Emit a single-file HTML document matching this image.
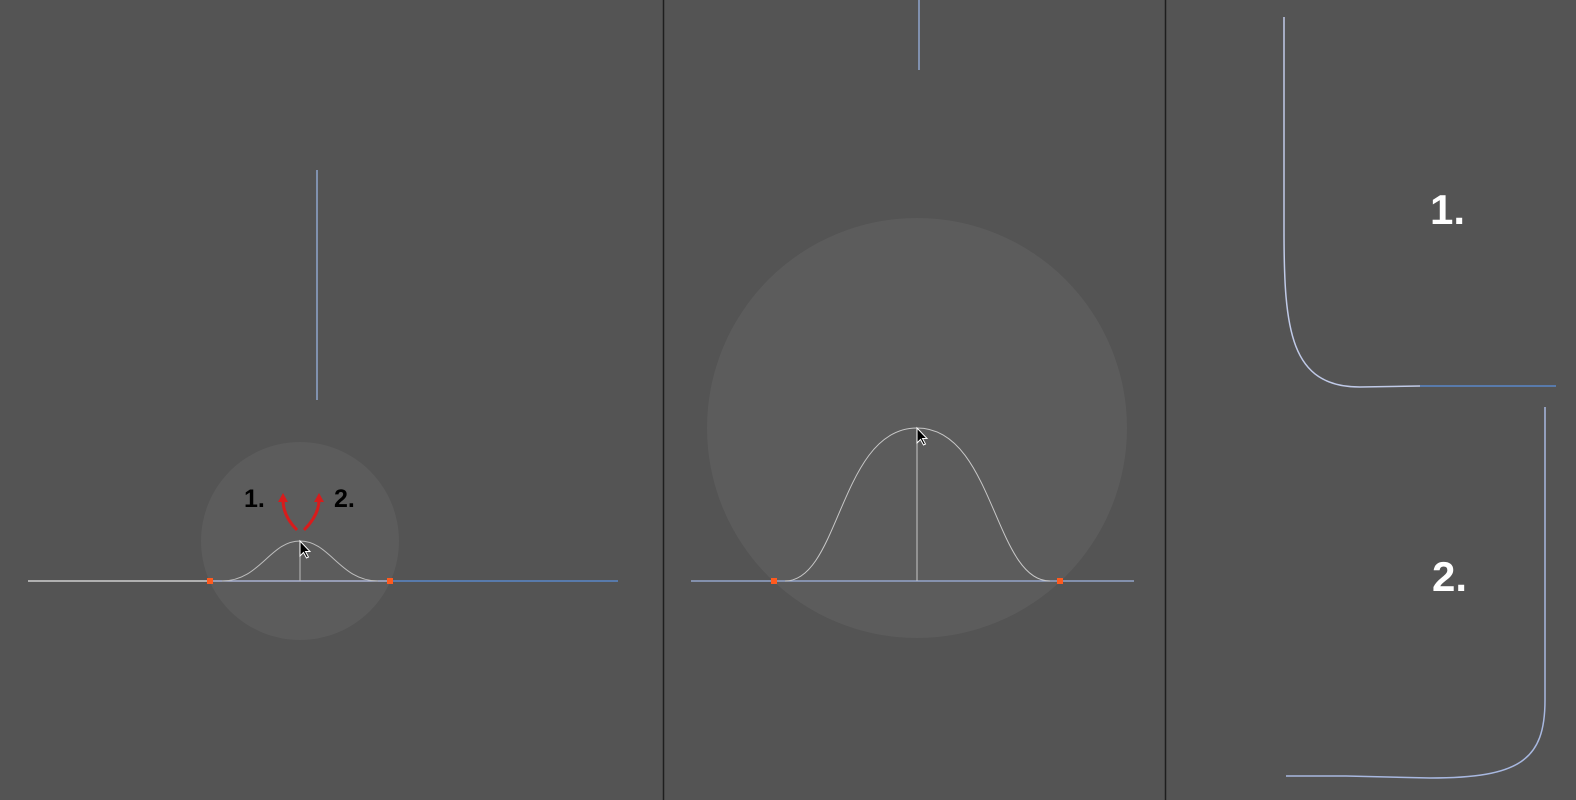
<!DOCTYPE html>
<html><head><style>
html,body{margin:0;padding:0;background:#545454;width:1576px;height:800px;overflow:hidden}
svg{display:block}
text{font-family:"Liberation Sans",Arial,sans-serif;font-weight:bold}
</style></head><body>
<svg width="1576" height="800" viewBox="0 0 1576 800">
<rect width="1576" height="800" fill="#545454"/>
<line x1="663.5" y1="0" x2="663.5" y2="800" stroke="#1e1e1e" stroke-width="1.5"/>
<line x1="1165.5" y1="0" x2="1165.5" y2="800" stroke="#1e1e1e" stroke-width="1.5"/>
<!-- left panel -->
<circle cx="300" cy="541" r="99" fill="#5c5c5c"/>
<line x1="317" y1="170" x2="317" y2="400" stroke="#8fa5cc" stroke-width="1.5"/>
<line x1="28" y1="581" x2="210" y2="581" stroke="#e6e6e6" stroke-width="1.2"/>
<line x1="210" y1="581" x2="390" y2="581" stroke="#b8c2e8" stroke-width="1.2"/>
<line x1="390" y1="581" x2="618" y2="581" stroke="#5a87c8" stroke-width="1.5"/>
<path d="M222 581 C260 581 270 541 300 541 C330 541 340 581 378 581" fill="none" stroke="#bdbdbd" stroke-width="1"/>
<line x1="300" y1="541" x2="300" y2="581" stroke="#bdbdbd" stroke-width="1"/>
<rect x="207" y="578" width="6" height="6" fill="#ff5a1e"/>
<rect x="387" y="578" width="6" height="6" fill="#ff5a1e"/>
<path d="M297 530 C287 520 283 510 283 500" fill="none" stroke="#d81c1c" stroke-width="3"/>
<path d="M278 502 L283 493 L288 502 Z" fill="#d81c1c"/>
<path d="M304 530 C314 520 319 510 319 500" fill="none" stroke="#d81c1c" stroke-width="3"/>
<path d="M314 502 L319 493 L324 502 Z" fill="#d81c1c"/>
<text x="244" y="507" font-size="25" fill="#000">1.</text>
<text x="334" y="507" font-size="25" fill="#000">2.</text>
<path d="M300 541 L300 556 L303.5 552.5 L306.5 558 L308.5 557 L305.5 551.5 L310 551.5 Z" fill="#000" stroke="#fff" stroke-width="1"/>
<!-- middle panel -->
<circle cx="917" cy="428" r="210" fill="#5c5c5c"/>
<line x1="919" y1="0" x2="919" y2="70" stroke="#8fa5cc" stroke-width="1.5"/>
<line x1="691" y1="581" x2="1134" y2="581" stroke="#9fb3e0" stroke-width="1.2"/>
<path d="M785 581 C840 581 840 428 917 428 C994 428 994 581 1050 581" fill="none" stroke="#c8c8c8" stroke-width="1"/>
<line x1="917" y1="428" x2="917" y2="581" stroke="#c8c8c8" stroke-width="1"/>
<rect x="771" y="578" width="6" height="6" fill="#ff5a1e"/>
<rect x="1057" y="578" width="6" height="6" fill="#ff5a1e"/>
<path d="M917 428 L917 443 L920.5 439.5 L923.5 445 L925.5 444 L922.5 438.5 L927 438.5 Z" fill="#000" stroke="#fff" stroke-width="1"/>
<!-- right panel -->
<path d="M1284 17 L1284 230 C1284 330 1290 387 1360 387 L1420 386" fill="none" stroke="#c0cae8" stroke-width="1.5"/>
<line x1="1420" y1="386" x2="1556" y2="386" stroke="#5a87c8" stroke-width="1.5"/>
<path d="M1545 407 L1545 700 C1545 760 1520 778 1430 778 L1346 776 L1286 776" fill="none" stroke="#a8b8e0" stroke-width="1.5"/>
<text x="1430" y="224" font-size="42" fill="#fff">1.</text>
<text x="1432" y="591" font-size="42" fill="#fff">2.</text>
</svg>
</body></html>
